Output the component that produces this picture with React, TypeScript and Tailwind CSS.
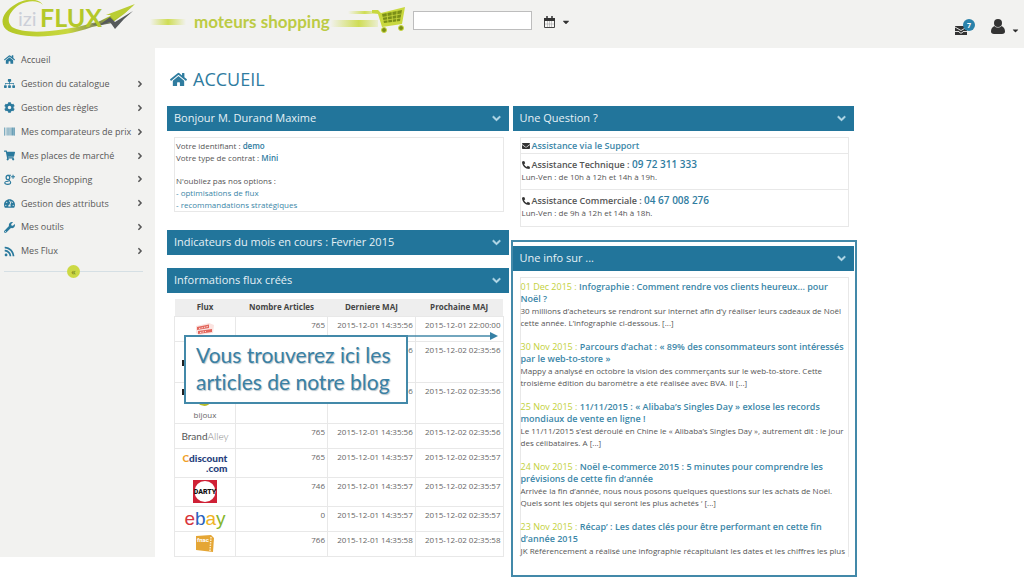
import { useState } from "react";
import type { ReactNode } from "react";
import {
  FaAngleRight,
  FaBarcode,
  FaCaretDown,
  FaChevronDown,
  FaCog,
  FaEnvelope,
  FaHome,
  FaPhoneAlt,
  FaRss,
  FaShoppingCart,
  FaSitemap,
  FaTachometerAlt,
  FaWrench,
} from "react-icons/fa";

function GooglePlus({ className }: { className?: string }) {
  return (
    <svg viewBox="0 0 14 14" className={className} fill="none" stroke="currentColor" aria-hidden="true">
      <ellipse cx="5" cy="4.500" rx="2.300" ry="2.800" strokeWidth="1.600" />
      <path d="M4.500 1.500H9M6 7C6 8 8.500 9 8.500 10.800C8.500 12.300 7 13.200 4.700 13.200C2.500 13.200 1 12.400 1 11.200C1 9.800 2.700 9.200 6 9.200" strokeWidth="1.400" />
      <path d="M11.500 1V6M9 3.500H14" strokeWidth="1.400" />
    </svg>
  );
}

const menu = [
  { label: "Accueil", icon: FaHome, sub: false },
  { label: "Gestion du catalogue", icon: FaSitemap, sub: true },
  { label: "Gestion des règles", icon: FaCog, sub: true },
  { label: "Mes comparateurs de prix", icon: FaBarcode, sub: true },
  { label: "Mes places de marché", icon: FaShoppingCart, sub: true },
  { label: "Google Shopping", icon: GooglePlus, sub: true },
  { label: "Gestion des attributs", icon: FaTachometerAlt, sub: true },
  { label: "Mes outils", icon: FaWrench, sub: true },
  { label: "Mes Flux", icon: FaRss, sub: true },
];

const flux = [
  { id: "photobox", count: "765", last: "2015-12-01 14:35:56", next: "2015-12-01 22:00:00", height: "h-[25px]" },
  { id: "amazon", count: "", last: "2015-12-01 14:35:56", next: "2015-12-02 02:35:56", height: "h-[41px]" },
  { id: "bijoux", count: "", last: "2015-12-01 14:35:56", next: "2015-12-02 02:35:56", height: "h-[41px]" },
  { id: "brandalley", count: "765", last: "2015-12-01 14:35:56", next: "2015-12-02 02:35:56", height: "h-[25px]" },
  { id: "cdiscount", count: "765", last: "2015-12-01 14:35:57", next: "2015-12-02 02:35:57", height: "h-[29px]" },
  { id: "darty", count: "746", last: "2015-12-01 14:35:57", next: "2015-12-02 02:35:57", height: "h-[29px]" },
  { id: "ebay", count: "0", last: "2015-12-01 14:35:57", next: "2015-12-02 02:35:57", height: "h-[25px]" },
  { id: "fnac", count: "766", last: "2015-12-01 14:35:58", next: "2015-12-02 02:35:58", height: "h-[25px]" },
];

const articles = [
  {
    date: "01 Dec 2015 :",
    title: ["Infographie : Comment rendre vos clients heureux... pour", "Noël ?"],
    text: ["30 millions d’acheteurs se rendront sur internet afin d’y réaliser leurs cadeaux de Noël", "cette année. L’infographie ci-dessous. [...]"],
  },
  {
    date: "30 Nov 2015 :",
    title: ["Parcours d’achat : « 89% des consommateurs sont intéressés", "par le web-to-store »"],
    text: ["Mappy a analysé en octobre la vision des commerçants sur le web-to-store. Cette", "troisième édition du baromètre a été réalisée avec BVA. Il [...]"],
  },
  {
    date: "25 Nov 2015 :",
    title: ["11/11/2015 : « Alibaba’s Singles Day » exlose les records", "mondiaux de vente en ligne !"],
    text: ["Le 11/11/2015 s’est déroulé en Chine le « Alibaba’s Singles Day », autrement dit : le jour", "des célibataires. A [...]"],
  },
  {
    date: "24 Nov 2015 :",
    title: ["Noël e-commerce 2015 : 5 minutes pour comprendre les", "prévisions de cette fin d’année"],
    text: ["Arrivée la fin d’année, nous nous posons quelques questions sur les achats de Noël.", "Quels sont les objets qui seront les plus achetés ‘ [...]"],
  },
  {
    date: "23 Nov 2015 :",
    title: ["Récap’ : Les dates clés pour être performant en cette fin", "d’année 2015"],
    text: ["JK Référencement a réalisé une infographie récapitulant les dates et les chiffres les plus"],
  },
];

function Logo() {
  return (
    <svg viewBox="0 0 136 40" className="h-10 w-[136px] shrink-0" aria-label="iziFLUX" role="img">
      <defs>
        <linearGradient id="ring" x1="0" y1="0" x2="1" y2="0">
          <stop offset="0" stopColor="#b3c726" />
          <stop offset="0.6" stopColor="#c9d83f" />
          <stop offset="1" stopColor="#5c6062" />
        </linearGradient>
        <linearGradient id="wing" x1="0" y1="1" x2="1" y2="0">
          <stop offset="0" stopColor="#5c6062" />
          <stop offset="0.4" stopColor="#a9bf2c" />
          <stop offset="1" stopColor="#c9d83f" />
        </linearGradient>
      </defs>
      <path
        d="M43 5C39 -2 26 -2 16 4C4 11 0 20 4 27C12 40 60 39 92 27L112 23L110 20L92 23C62 32 24 35 12 27C5 20 10 11 19 5C28 0 38 0 43 5Z"
        fill="url(#ring)"
      />
      <path d="M92 25L108 17L134 5L124 14L113 22L101 24Z" fill="url(#wing)" />
      <path d="M98 26L110 17L115 22L133 11L124 19L115 29L110 22Z" fill="#55595b" />
      <path d="M106 15L135 4L126 12L114 20L110 15Z" fill="#bacd33" />
      <text x="18" y="26" fontFamily="Lato, sans-serif" fontSize="20" fill="#cccfd8">izi</text>
      <text x="40" y="27" fontFamily="Lato, sans-serif" fontSize="25" fontWeight="700" fill="#b4c829">FLUX</text>
    </svg>
  );
}

function SpeedCart() {
  return (
    <svg viewBox="0 0 76 34" className="mt-1 h-[34px] w-[76px] shrink-0" aria-hidden="true">
      <defs>
        <linearGradient id="trail" x1="0" y1="0" x2="1" y2="0">
          <stop offset="0" stopColor="#cfdd55" stopOpacity="0" />
          <stop offset="0.6" stopColor="#cfdd55" />
          <stop offset="1" stopColor="#cfdd55" stopOpacity="0.2" />
        </linearGradient>
      </defs>
      <rect x="0" y="16" width="48" height="7" fill="url(#trail)" />
      <rect x="18" y="7" width="28" height="3" fill="url(#trail)" />
      <path d="M42 6L48 6L51 9L75 3L72 20L52 23L48 10L42 9Z" fill="#c9d83f" />
      <path d="M52 10L72 6L70 17L54 19Z" fill="#7b8f17" />
      <path d="M52 13.500L71 10M53 16.500L71 14M57 9L58 19M62 8L62.500 18M67 7L66.500 18" stroke="#c9d83f" strokeWidth="0.800" />
      <circle cx="54" cy="26" r="2.500" fill="#7b8f17" stroke="#c9d83f" />
      <circle cx="71" cy="24" r="2.500" fill="#7b8f17" stroke="#c9d83f" />
    </svg>
  );
}

function FluxLogo({ id }: { id: string }) {
  if (id === "photobox") {
    return (
      <svg viewBox="0 0 20 14" className="h-[14px] w-5" role="img" aria-label="photobox">
        <path d="M1 4L14 1L19 3L18 11L4 13L1 11Z" fill="#fbe3e0" />
        <path d="M2 5L14 2.500L14 6L2 8Z" fill="#e2655b" />
        <path d="M3 9L17 7L17 10L3 12Z" fill="#e2655b" />
        <path d="M4 6.500L13 4.500M5 10.500L11 9.500" stroke="#fff" strokeWidth="0.800" strokeDasharray="1.500 1" />
      </svg>
    );
  }
  if (id === "amazon") {
    return (
      <svg viewBox="0 0 46 14" className="h-[14px] w-[46px]" aria-hidden="true">
        <path d="M0 5H6V11H0Z" fill="#222" />
        <path d="M10 10C20 15 30 15 38 10" stroke="#f0a028" strokeWidth="1.500" fill="none" />
      </svg>
    );
  }
  if (id === "bijoux") {
    return (
      <span className="block text-center text-[8px] leading-3">
        <svg viewBox="0 0 46 24" className="h-6 w-[46px]" aria-hidden="true">
          <path d="M0 4H6V10H0Z" fill="#222" />
          <path d="M16 17C20 21 25 21 28 17" stroke="#b9bd2a" strokeWidth="2" fill="none" />
        </svg>
        bijoux
      </span>
    );
  }
  if (id === "brandalley") {
    return (
      <span className="font-['Lato',sans-serif] text-[10px] leading-3 text-[#555]">
        Brand<span className="font-light text-[#888]">Alley</span>
      </span>
    );
  }
  if (id === "cdiscount") {
    return (
      <span className="block text-right font-['Lato',sans-serif] text-[10px] leading-[10px] font-black text-[#27417c]">
        <span className="text-[#f0a028]">C</span>discount
        <br />
        .com
      </span>
    );
  }
  if (id === "darty") {
    return (
      <svg viewBox="0 0 24 23" className="h-[23px] w-6" role="img" aria-label="Darty">
        <rect width="24" height="23" fill="#cf2136" />
        <circle cx="12" cy="11.500" r="10.500" fill="#fff" />
        <text x="12" y="14" textAnchor="middle" fontFamily="Roboto, sans-serif" fontSize="7" fontWeight="900" fill="#111">DARTY</text>
      </svg>
    );
  }
  if (id === "ebay") {
    return (
      <span className="block font-['Liberation_Sans',sans-serif] text-[19px] leading-[19px]">
        <span className="text-[#d8343c]">e</span>
        <span className="text-[#2a62bd]">b</span>
        <span className="text-[#f0b323]">a</span>
        <span className="text-[#86b52c]">y</span>
      </span>
    );
  }
  return (
    <svg viewBox="0 0 20 18" className="h-[18px] w-5" role="img" aria-label="fnac">
      <path d="M1 1L16 0L19 3L18 17L1 15Z" fill="#e5a635" />
      <path d="M16 2L15 16" stroke="#fbe9c4" strokeWidth="1.500" strokeDasharray="1.500 1" />
      <text x="2" y="7" fontFamily="Roboto, sans-serif" fontSize="6" fontWeight="700" fill="#fff">fnac</text>
    </svg>
  );
}

function Panel({ title, children }: { title: string; children?: ReactNode }) {
  const [open, setOpen] = useState(true);
  return (
    <section>
      <div className="flex h-[25px] items-center justify-between bg-[#22759b] pr-2 pl-[7px] text-[#e6f1f6]">
        <h2 className="text-[11px] whitespace-nowrap">{title}</h2>
        <button type="button" aria-label={title} aria-expanded={open} onClick={() => setOpen(!open)}>
          <FaChevronDown className="size-[9px] stroke-[#b9dcea] stroke-[40px] text-[#b9dcea]" />
        </button>
      </div>
      {open && children && <div className="pt-[6px] pr-[5px] pl-[7px]">{children}</div>}
    </section>
  );
}

function Sidebar() {
  return (
    <nav className="h-[509px] w-[155px] shrink-0 bg-[#f2f2f0]">
      <ul className="flex h-[215px] flex-col">
        {menu.map(({ label, icon: Icon, sub }) => (
          <li key={label} className="flex-1">
            <a href="#" className="flex h-full items-center pr-[10px] pl-1 text-[9px] text-[#585858]">
              <Icon className="mr-[6px] size-[11px] shrink-0 text-[#2b7a9d]" />
              <span className="flex-1 whitespace-nowrap">{label}</span>
              {sub && <FaAngleRight className="size-[10px] shrink-0" />}
            </a>
          </li>
        ))}
      </ul>
      <div className="mx-1 flex items-center pt-[2px] pr-2">
        <span className="h-px flex-1 bg-[#d5dfe4]" />
        <button type="button" aria-label="Réduire le menu" className="flex size-[13px] items-center justify-center rounded-full bg-[#ccd944] text-[9px] leading-none text-[#6d7a1c]">
          «
        </button>
        <span className="h-px flex-1 bg-[#d5dfe4]" />
      </div>
    </nav>
  );
}

function FluxTable() {
  return (
    <table className="w-full table-fixed border-collapse text-[8px] leading-3 text-[#666]">
      <colgroup>
        <col className="w-[61px]" />
        <col className="w-[92px]" />
        <col />
        <col />
      </colgroup>
      <thead>
        <tr className="h-[17px] bg-[#eeeeee] text-[#444]">
          <th>Flux</th>
          <th>Nombre Articles</th>
          <th>Derniere MAJ</th>
          <th>Prochaine MAJ</th>
        </tr>
      </thead>
      <tbody>
        {flux.map((row) => (
          <tr key={row.id} className={row.height}>
            <td className="border border-[#e8e8e8] p-0 text-center align-middle">
              <div className="flex justify-center whitespace-nowrap">
                <FluxLogo id={row.id} />
              </div>
            </td>
            <td className="border border-[#e8e8e8] px-[2px] pt-[2px] text-right align-top">{row.count}</td>
            <td className="border border-[#e8e8e8] px-[2px] pt-[2px] text-right align-top whitespace-nowrap">{row.last}</td>
            <td className="border border-[#e8e8e8] px-[2px] pt-[2px] text-right align-top whitespace-nowrap">{row.next}</td>
          </tr>
        ))}
      </tbody>
    </table>
  );
}

export default function App() {
  return (
    <div className="min-h-screen bg-white font-['Open_Sans',sans-serif] text-[#555]">
      <header className="flex h-12 items-start bg-[#f2f2f0]">
        <Logo />
        <div className="flex flex-1 items-center">
          <span className="mt-[6px] mr-2 ml-[14px] h-[6px] w-9 bg-linear-to-r from-transparent via-[#cfdd55] to-transparent" />
          <span className="mt-[6px] font-['Lato',sans-serif] text-[17px] font-bold whitespace-nowrap text-[#bccb45]">moteurs shopping</span>
          <SpeedCart />
          <input type="text" aria-label="Rechercher" className="mt-[2px] ml-[7px] h-[19px] w-[119px] border border-[#bdbdbd] bg-white px-1 text-[9px] outline-none" />
          <button type="button" aria-label="Calendrier" className="mt-[6px] ml-3 flex items-center gap-[6px] text-[#333]">
            <svg viewBox="0 0 11 12" className="h-3 w-[11px]" aria-hidden="true">
              <path d="M0.500 2.500H10.500V11.500H0.500Z" fill="#f8f8f6" stroke="#444" />
              <path d="M0 2H11V5H0Z" fill="#333" />
              <path d="M3 0V3M8 0V3" stroke="#333" strokeWidth="1.500" />
              <path d="M1 8H10M3.500 5V11M5.500 5V11M7.500 5V11" stroke="#999" strokeWidth="0.500" />
            </svg>
            <FaCaretDown className="size-[10px]" />
          </button>
        </div>
        <div className="flex items-center gap-4 pt-[18px] pr-1 text-[#2d2d2d]">
          <button type="button" aria-label="Messages" className="relative flex h-[17px] w-5 items-end">
            <svg viewBox="0 0 12 9" className="h-[9px] w-3" aria-hidden="true">
              <path d="M0 0H12V9H0Z" fill="#333" />
              <path d="M0 1L6 4.500L12 1M0 5.500H4L5 7H7L8 5.500H12" stroke="#f2f2f0" strokeWidth="0.900" fill="none" />
            </svg>
            <span className="absolute top-[1px] right-0 flex size-3 items-center justify-center rounded-full bg-[#2a82aa] text-[7px] leading-none font-bold text-white">7</span>
          </button>
          <button type="button" aria-label="Compte" className="flex items-center gap-[6px]">
            <svg viewBox="0 0 14 15" className="h-[15px] w-[14px]" aria-hidden="true">
              <circle cx="7" cy="4" r="4" fill="#333" />
              <path d="M3.500 7C1 8 0 10 0 12.500C0 14 1 15 3 15H11C13 15 14 14 14 12.500C14 10 13 8 10.500 7C9 9 5 9 3.500 7Z" fill="#333" />
            </svg>
            <FaCaretDown className="mt-2 size-[9px]" />
          </button>
        </div>
      </header>

      <div className="flex items-start">
        <Sidebar />
        <main className="min-w-0 flex-1 pt-[18px] pr-[170px] pl-3">
          <h1 className="flex h-[27px] items-center gap-[6px] pl-[3px] text-[18px] text-[#2f7c9f]">
            <FaHome className="size-[17px]" />
            ACCUEIL
          </h1>

          <div className="grid grid-cols-2 gap-1 pt-[13px]">
            <div className="relative flex min-w-0 flex-col">
              <Panel title="Bonjour M. Durand Maxime">
                <div className="mb-[18px] border border-[#e8e8e8] px-[1px] pt-[2px] text-[8px] leading-3">
                  <p>Votre identifiant : <b className="font-semibold text-[#2f7c9f]">demo</b></p>
                  <p>Votre type de contrat : <b className="font-semibold text-[#2f7c9f]">Mini</b></p>
                  <p className="pt-[11px]">N'oubliez pas nos options :</p>
                  <p><a href="#" className="text-[#3c87a8]">- optimisations de flux</a></p>
                  <p><a href="#" className="text-[#3c87a8]">- recommandations stratégiques</a></p>
                </div>
              </Panel>
              <div className="mb-[13px]">
                <Panel title="Indicateurs du mois en cours : Fevrier 2015" />
              </div>
              <Panel title="Informations flux créés">
                <FluxTable />
              </Panel>

              <div className="absolute top-[229px] left-[17px] flex items-start">
                <p className="h-[69px] w-[224px] border-2 border-[#4389a9] bg-white pt-[4px] pl-[10px] font-['Lato',sans-serif] text-[21px] leading-[27px] whitespace-nowrap text-[#3a80a3] [font-variant-ligatures:none] [text-shadow:1px_1px_1px_#b5c3cb]">
                  Vous trouverez ici les
                  <br />
                  articles de notre blog
                </p>
                <svg viewBox="0 0 90 8" className="-mt-[3px] h-2 w-[90px]" aria-hidden="true">
                  <path d="M0 4H83" stroke="#4389a9" strokeWidth="1.500" />
                  <path d="M82 0L90 4L82 8Z" fill="#3580a5" />
                </svg>
              </div>
            </div>

            <div className="min-w-0">
              <Panel title="Une Question ?">
                <div className="mb-[19px] divide-y divide-[#e8e8e8] border border-[#e8e8e8] text-[9px] leading-3 font-semibold">
                  <p className="flex h-4 items-center gap-[2px] pl-[1px]">
                    <FaEnvelope className="size-2 text-[#333]" />
                    <a href="#" className="text-[#3c87a8]">Assistance via le Support</a>
                  </p>
                  <div className="h-9 pt-1 pl-[1px]">
                    <p className="flex items-center gap-[2px]">
                      <FaPhoneAlt className="size-2 text-[#333]" />
                      <span>
                        Assistance Technique : <b className="text-[10px] font-semibold text-[#2f7c9f]">09 72 311 333</b>
                      </span>
                    </p>
                    <p className="text-[8px] font-normal">Lun-Ven : de 10h à 12h et 14h à 19h.</p>
                  </div>
                  <div className="h-9 pt-1 pl-[1px]">
                    <p className="flex items-center gap-[2px]">
                      <FaPhoneAlt className="size-2 text-[#333]" />
                      <span>
                        Assistance Commerciale : <b className="text-[10px] font-semibold text-[#2f7c9f]">04 67 008 276</b>
                      </span>
                    </p>
                    <p className="text-[8px] font-normal">Lun-Ven : de 9h à 12h et 14h à 18h.</p>
                  </div>
                </div>
              </Panel>

              <div className="relative pb-5">
                <Panel title="Une info sur ...">
                  <div className="flex flex-col gap-3 border border-b-0 border-[#e8e8e8] pt-[3px] text-[8px] leading-3 whitespace-nowrap">
                    {articles.map((article) => (
                      <article key={article.date}>
                        <h3 className="text-[9px] leading-3 font-semibold text-[#3c87a8]">
                          <span className="font-normal text-[#c3d13c]">{article.date}</span>{" "}
                          <a href="#">
                            {article.title[0]}
                            <br />
                            {article.title[1]}
                          </a>
                        </h3>
                        {article.text.map((line) => (
                          <p key={line}>{line}</p>
                        ))}
                      </article>
                    ))}
                  </div>
                </Panel>
                <div className="pointer-events-none absolute -top-[6px] -right-[3px] bottom-0 -left-[2px] border-2 border-[#4389a9]" />
              </div>
            </div>
          </div>
        </main>
      </div>
    </div>
  );
}
